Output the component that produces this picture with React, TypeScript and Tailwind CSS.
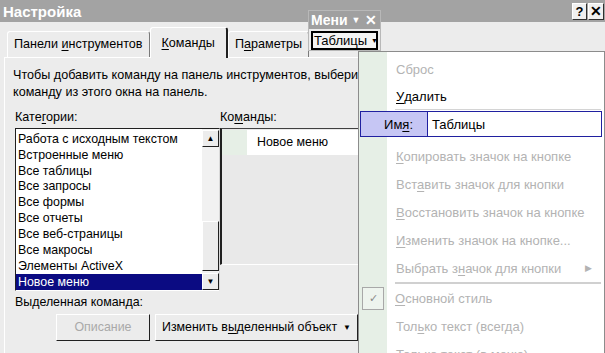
import React from 'react'

const categories = [
  'Работа с исходным текстом',
  'Встроенные меню',
  'Все таблицы',
  'Все запросы',
  'Все формы',
  'Все отчеты',
  'Все веб-страницы',
  'Все макросы',
  'Элементы ActiveX',
]

function U({ children }: { children: React.ReactNode }) {
  return <span className="underline underline-offset-2">{children}</span>
}

function Tab({ children, active }: { children: React.ReactNode; active?: boolean }) {
  return (
    <div
      className={`flex items-center rounded-t-[3px] border-l border-t border-r border-l-white border-t-white ${
        active
          ? 'relative z-10 -mb-px h-[31px] border-r-2 border-r-[#202020] bg-[#ececec] px-[11px]'
          : 'h-[26px] border-r-[#7a7a7a] bg-[#ececec] px-[6px]'
      }`}
    >
      {children}
    </div>
  )
}

function MenuItem({ children, arrow }: { children: React.ReactNode; arrow?: boolean }) {
  return (
    <div className="flex h-[28px] items-center justify-between whitespace-nowrap pl-[37px] pr-[12px] text-[#b3b3b3]">
      <span>{children}</span>
      {arrow && <span className="text-[9px]">▶</span>}
    </div>
  )
}

export default function App() {
  return (
    <div className="relative h-[353px] w-[605px] overflow-hidden bg-[#ececec] font-['Liberation_Sans',sans-serif] text-[12.4px] leading-none text-black">
      {/* title bar */}
      <div className="flex h-[22px] items-center justify-between bg-[#a3a3a3] pl-[3px] pr-[1px]">
        <span className="text-[15px] font-bold text-white">Настройка</span>
        <div className="flex gap-[1px]">
          <div className="flex h-[17px] w-[15px] items-center justify-center border border-b-[#303030] border-l-white border-r-[#303030] border-t-white bg-[#f0f0f0] text-[13px] font-bold">
            ?
          </div>
          <div className="flex h-[17px] w-[16px] items-center justify-center border border-b-[#303030] border-l-white border-r-[#303030] border-t-white bg-[#f0f0f0] text-[14px] font-bold">
            ✕
          </div>
        </div>
      </div>

      {/* tabs */}
      <div className="flex h-[35px] items-end whitespace-nowrap pl-[7px] text-[12.6px]">
        <Tab>
          <span>
            Панели <U>и</U>нструментов
          </span>
        </Tab>
        <Tab active>
          <span>
            <U>К</U>оманды
          </span>
        </Tab>
        <Tab>
          <span>
            П<U>а</U>раметры
          </span>
        </Tab>
      </div>

      {/* panel */}
      <div className="ml-[4px] h-[300px] border-l border-t border-white pl-[8px] pt-[9px]">
        <p className="whitespace-nowrap text-[12.6px] leading-[17px]">
          Чтобы добавить команду на панель инструментов, выбери
          <br />
          команду из этого окна на панель.
        </p>

        <div className="ml-[2px] mt-[8px] flex h-[17px] items-center text-[12.6px]">
          <span className="w-[205px]">
            Кате<U>г</U>ории:
          </span>
          <span>
            Ко<U>м</U>анды:
          </span>
        </div>

        <div className="ml-[2px] mt-[2px] flex items-start">
          {/* categories listbox */}
          <div className="flex h-[163px] w-[205px] border border-b-white border-l-[#202020] border-r-[#d8d8d8] border-t-[#202020] bg-white">
            <div className="flex flex-1 flex-col whitespace-nowrap pt-[2px]">
              {categories.map((c) => (
                <div key={c} className="flex h-[16px] items-center pl-[2px]">
                  {c}
                </div>
              ))}
              <div className="flex h-[16px] items-center bg-[#0b0b82] pl-[2px] text-white">Новое меню</div>
            </div>
            <div className="flex w-[17px] flex-col bg-[#f1f1f1] pt-[1px]">
              <div className="flex h-[17px] items-center justify-center border border-b-[#202020] border-l-white border-r-[#202020] border-t-white bg-[#ececec] text-[8px]">
                ▲
              </div>
              <div className="h-[74px]" />
              <div className="h-[50px] border border-b-[#202020] border-l-white border-r-[#202020] border-t-white bg-[#ececec]" />
              <div className="flex-1" />
              <div className="flex h-[17px] items-center justify-center border border-b-[#202020] border-l-white border-r-[#202020] border-t-white bg-[#ececec] text-[8px]">
                ▼
              </div>
            </div>
          </div>

          {/* commands list */}
          <div className="h-[137px] w-[160px] border-b border-l-2 border-t border-b-white border-l-[#202020] border-t-[#404040] bg-[#e9e9e9] pt-px">
            <div className="flex h-[25px] bg-white">
              <div className="w-[25px] bg-[#e6efe6]" />
              <span className="self-center whitespace-nowrap pl-[10px]">Новое меню</span>
            </div>
          </div>
        </div>

        <div className="ml-[2px] mt-[3px] flex h-[17px] items-center">Выделенная команда:</div>

        <div className="mt-[3px] flex gap-[5px] whitespace-nowrap pl-[43px]">
          <div className="flex h-[27px] w-[94px] items-center justify-center border border-b-[#202020] border-l-white border-r-[#202020] border-t-white bg-[#ececec] text-[#a9a9a9]">
            Описание
          </div>
          <div className="flex h-[27px] w-[203px] items-center justify-between border border-b-[#202020] border-l-white border-r-[#202020] border-t-white bg-[#ececec] pl-[6px] pr-[6px]">
            <span>
              Изменить в<U>ы</U>деленный объект
            </span>
            <span className="text-[8px]">▼</span>
          </div>
        </div>
      </div>

      {/* floating toolbar */}
      <div className="absolute left-[308px] top-[10px] flex h-[41px] w-[73px] flex-col border border-[#b8b8b8] bg-[#ececec] text-[13px]">
        <div className="flex h-[18px] items-center gap-[4px] bg-[#a0a0a0] pl-[2px] text-white">
          <span className="text-[14px] font-bold">Мени</span>
          <span className="text-[9px]">▼</span>
          <span className="ml-auto pr-[3px] text-[14px] font-bold">✕</span>
        </div>
        <div className="mx-[2px] mt-[2px] flex h-[19px] items-center gap-[4px] border-2 border-black bg-[#f4f4f4] pl-[1px]">
          <span>Таблицы</span>
          <span className="text-[7px]">▼</span>
        </div>
      </div>

      {/* popup menu */}
      <div className="absolute left-[358px] top-[51px] h-[310px] w-[247px] border border-[#8c8c8c] bg-[linear-gradient(to_right,#e6efe6_28px,#ffffff_28px)] pt-[3px] text-[13px]">
        <MenuItem>Сброс</MenuItem>
        <div className="flex h-[26px] items-center pl-[37px]">
          <U>У</U>далить
        </div>
        <div className="ml-[36px] mr-[3px] h-px bg-[#d4d4d4]" />
        <div className="ml-px mr-[2px] mt-px flex h-[26px] border border-[#2020a0]">
          <div className="flex w-[67px] items-center justify-end border-r border-[#2020a0] bg-[#c6c6f4] pr-[14px]">
            Им<U>я</U>:
          </div>
          <div className="flex flex-1 items-center bg-white pl-[4px]">Таблицы</div>
        </div>
        <div className="h-[5px]" />
        <MenuItem>
          <U>К</U>опировать значок на кнопке
        </MenuItem>
        <MenuItem>
          Вст<U>а</U>вить значок для кнопки
        </MenuItem>
        <MenuItem>
          <U>В</U>осстановить значок на кнопке
        </MenuItem>
        <MenuItem>
          <U>И</U>зменить значок на кнопке...
        </MenuItem>
        <MenuItem arrow>
          Выбрать з<U>н</U>ачок для кнопки
        </MenuItem>
        <div className="ml-[36px] mr-[3px] h-[2px] bg-[#d0d0d0]" />
        <div className="flex h-[28px] items-center text-[#b3b3b3]">
          <div className="ml-[3px] flex h-[23px] w-[22px] items-center justify-center border border-[#a8a8a8] bg-[#eef4ee] text-[11px] text-[#8a8a8a]">
            ✓
          </div>
          <span className="pl-[11px]">
            <U>О</U>сновной стиль
          </span>
        </div>
        <MenuItem>
          Тол<U>ь</U>ко текст (всегда)
        </MenuItem>
        <MenuItem>
          Только текст (в меню)
        </MenuItem>
      </div>
    </div>
  )
}
